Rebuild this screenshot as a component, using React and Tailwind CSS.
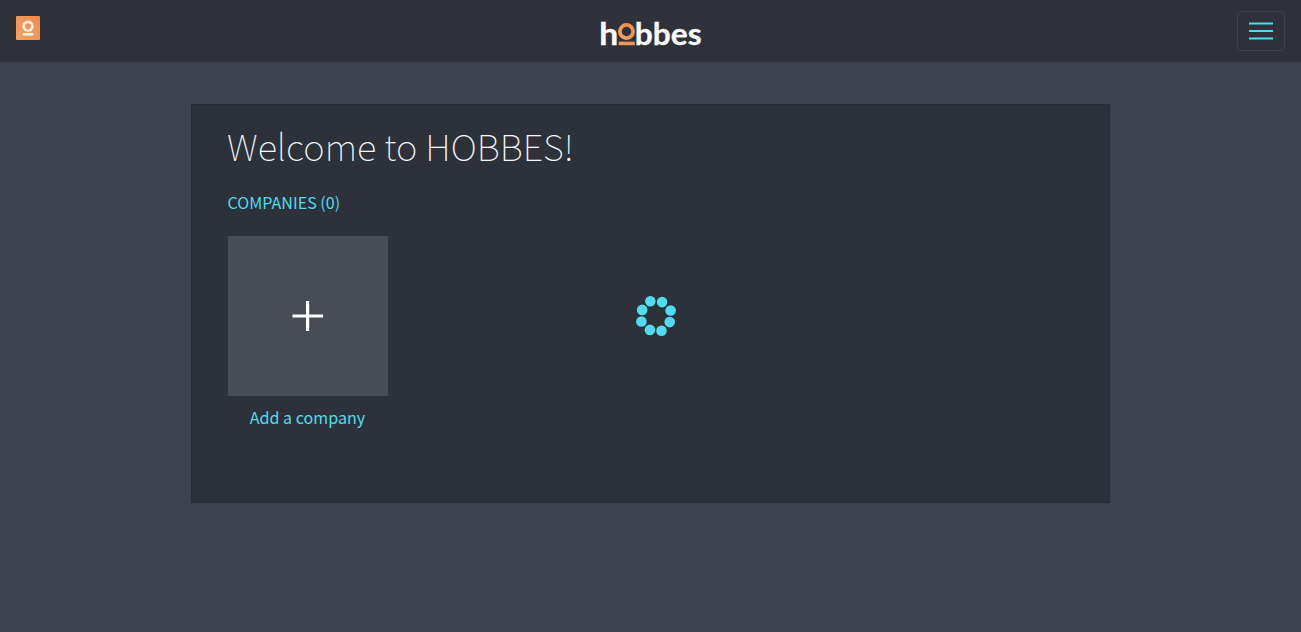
const DOTS = [
  [24.3, 11.3], [36.1, 12.1], [44.6, 20.5], [43.7, 32.1],
  [35.5, 40.8], [23.9, 39.9], [15.4, 31.5], [16.2, 19.9],
];

function BrandMark() {
  return (
    <svg className="block size-6" viewBox="0 0 24 24" fill="none">
      <defs>
        <linearGradient id="mark" x1="0" y1="1" x2="1" y2="0">
          <stop offset="0" stopColor="#f5a060" />
          <stop offset="1" stopColor="#ee8d4d" />
        </linearGradient>
      </defs>
      <rect width="24" height="24" rx="1" fill="url(#mark)" />
      <circle cx="12" cy="10.3" r="4.4" stroke="#fff3ea" strokeWidth="2.6" />
      <rect x="6.7" y="17" width="10.7" height="2.5" fill="#fff3ea" />
    </svg>
  );
}

function Wordmark() {
  return (
    <svg className="block" width="110" height="48" viewBox="-4 -10 110 48" fill="none">
      <defs>
        <linearGradient id="word" x1="0" y1="1" x2="1" y2="0">
          <stop offset="0" stopColor="#f5a060" />
          <stop offset="1" stopColor="#ec8a4b" />
        </linearGradient>
      </defs>
      <g fill="#fbfbfb" stroke="#fbfbfb" strokeWidth="0.3" fontFamily="Lato, sans-serif" fontWeight="700" fontSize="29.8">
        <text x="-0.7" y="25.2" textLength="19" lengthAdjust="spacingAndGlyphs">h</text>
        <text x="34.8" y="25.2" textLength="66.8" lengthAdjust="spacingAndGlyphs">bbes</text>
      </g>
      <circle cx="26.5" cy="11.5" r="6.6" stroke="url(#word)" strokeWidth="3.8" />
      <rect x="18.8" y="21.6" width="16" height="3.6" fill="url(#word)" />
    </svg>
  );
}

function Spinner() {
  return (
    <svg className="block" width="60" height="52" viewBox="0 0 60 52" fill="#50dcee">
      {DOTS.map(([x, y]) => (
        <circle key={`${x}-${y}`} cx={x} cy={y} r="5.3" />
      ))}
    </svg>
  );
}

export default function App() {
  return (
    <div className="min-h-screen bg-[#3c424e] font-['Noto_Sans_CJK_SC',sans-serif] text-[#50dcee]">
      <header className="grid h-[62px] grid-cols-[1fr_auto_1fr] items-start bg-[#2f323a] px-4">
        <a href="#" className="mt-4 w-6"><BrandMark /></a>
        <a href="#" className="mt-[10px]"><Wordmark /></a>
        <button className="mt-[11px] flex h-10 w-12 items-center justify-center justify-self-end rounded border border-[#3d424e]">
          <svg width="30" height="30" viewBox="0 0 30 30" stroke="#50dcee" strokeWidth="2">
            <path d="M3 7.5h24M3 15h24M3 22.5h24" />
          </svg>
        </button>
      </header>
      <main className="mx-auto mt-[42px] h-[399px] w-[919px] border border-[#292c33] bg-[#2d3139] px-9">
        <h1 className="mt-[15px] -ml-px text-[36.4px] leading-[50px] font-[100] whitespace-nowrap text-[#f8f8f8]">Welcome to HOBBES!</h1>
        <h2 className="mt-5 -ml-[0.5px] text-[16.1px] leading-6 whitespace-nowrap">COMPANIES (0)</h2>
        <div className="mt-[22px] flex">
          <a href="#" className="w-40 text-center">
            <div className="flex size-40 items-center justify-center bg-[#484c54]">
              <svg width="32" height="32" viewBox="0 0 32 32" stroke="#fff" strokeWidth="3.2">
                <path d="M0.5 16h30.5M15.6 1v30" />
              </svg>
            </div>
            <span className="mt-[9px] -ml-px block text-[16.1px] leading-6">Add a company</span>
          </a>
          <div className="ml-[238px] pt-[54px]"><Spinner /></div>
        </div>
      </main>
    </div>
  );
}
